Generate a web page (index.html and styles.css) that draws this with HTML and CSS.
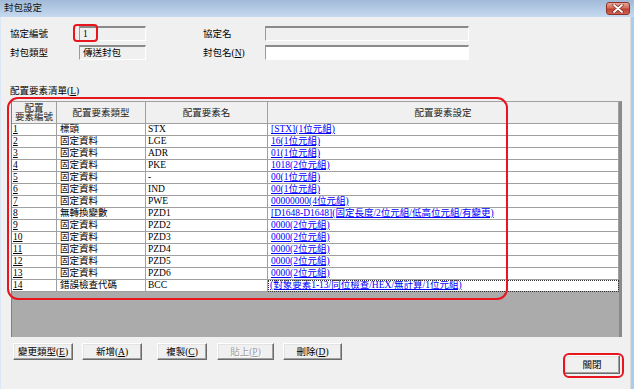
FILE: index.html
```html
<!DOCTYPE html>
<html lang="zh-Hant">
<head>
<meta charset="utf-8">
<title>封包設定</title>
<link rel="stylesheet" href="styles.css">
</head>
<body>
<div class="window">
  <div class="titlebar">
    <span class="title">封包設定</span>
    <button class="close" aria-label="close">
      <svg width="12" height="9" viewBox="0 0 12 9">
        <path d="M2 1 L10 8 M10 1 L2 8" stroke="#7a2a22" stroke-width="3.2" stroke-linecap="round"/>
        <path d="M2 1 L10 8 M10 1 L2 8" stroke="#ffffff" stroke-width="1.8" stroke-linecap="round"/>
      </svg>
    </button>
  </div>
  <div class="body">
    <div class="frow">
      <span class="lbl">協定編號</span><div class="tb tb-short ro">1</div>
      <span class="lbl2">協定名</span><div class="tb tb-wide ro"></div>
    </div>
    <div class="frow">
      <span class="lbl">封包類型</span><div class="tb tb-short ro">傳送封包</div>
      <span class="lbl2">封包名(<u>N</u>)</span><div class="tb tb-wide"></div>
    </div>
    <div class="listlabel">配置要素清單(<u>L</u>)</div>
    <div class="grid">
      <div class="ghead">
        <div class="hc hc-two">配置<br>要素編號</div>
        <div class="hc">配置要素類型</div>
        <div class="hc">配置要素名</div>
        <div class="hc">配置要素設定</div>
      </div>
      <div class="grow"><div class="c c1"><u>1</u></div><div class="c c2">標頭</div><div class="c c3">STX</div><div class="c c4"><a href="#">[STX](1位元組)</a></div></div>
      <div class="grow"><div class="c c1"><u>2</u></div><div class="c c2">固定資料</div><div class="c c3">LGE</div><div class="c c4"><a href="#">16(1位元組)</a></div></div>
      <div class="grow"><div class="c c1"><u>3</u></div><div class="c c2">固定資料</div><div class="c c3">ADR</div><div class="c c4"><a href="#">01(1位元組)</a></div></div>
      <div class="grow"><div class="c c1"><u>4</u></div><div class="c c2">固定資料</div><div class="c c3">PKE</div><div class="c c4"><a href="#">1018(2位元組)</a></div></div>
      <div class="grow"><div class="c c1"><u>5</u></div><div class="c c2">固定資料</div><div class="c c3">-</div><div class="c c4"><a href="#">00(1位元組)</a></div></div>
      <div class="grow"><div class="c c1"><u>6</u></div><div class="c c2">固定資料</div><div class="c c3">IND</div><div class="c c4"><a href="#">00(1位元組)</a></div></div>
      <div class="grow"><div class="c c1"><u>7</u></div><div class="c c2">固定資料</div><div class="c c3">PWE</div><div class="c c4"><a href="#">00000000(4位元組)</a></div></div>
      <div class="grow"><div class="c c1"><u>8</u></div><div class="c c2">無轉換變數</div><div class="c c3">PZD1</div><div class="c c4"><a href="#">[D1648-D1648](固定長度/2位元組/低高位元組/有變更)</a></div></div>
      <div class="grow"><div class="c c1"><u>9</u></div><div class="c c2">固定資料</div><div class="c c3">PZD2</div><div class="c c4"><a href="#">0000(2位元組)</a></div></div>
      <div class="grow"><div class="c c1"><u>10</u></div><div class="c c2">固定資料</div><div class="c c3">PZD3</div><div class="c c4"><a href="#">0000(2位元組)</a></div></div>
      <div class="grow"><div class="c c1"><u>11</u></div><div class="c c2">固定資料</div><div class="c c3">PZD4</div><div class="c c4"><a href="#">0000(2位元組)</a></div></div>
      <div class="grow"><div class="c c1"><u>12</u></div><div class="c c2">固定資料</div><div class="c c3">PZD5</div><div class="c c4"><a href="#">0000(2位元組)</a></div></div>
      <div class="grow"><div class="c c1"><u>13</u></div><div class="c c2">固定資料</div><div class="c c3">PZD6</div><div class="c c4"><a href="#">0000(2位元組)</a></div></div>
      <div class="grow"><div class="c c1"><u>14</u></div><div class="c c2">錯誤檢查代碼</div><div class="c c3">BCC</div><div class="c c4 focus"><a href="#">(對象要素1-13/同位檢查/HEX/無計算/1位元組)</a></div></div>
    </div>
    <div class="btns">
      <button class="btn b1">變更類型(<u>E</u>)</button>
      <button class="btn b2">新增(<u>A</u>)</button>
      <button class="btn b3">複製(<u>C</u>)</button>
      <button class="btn b4" disabled>貼上(<u>P</u>)</button>
      <button class="btn b5">刪除(<u>D</u>)</button>
      <button class="btn bclose">關閉</button>
    </div>
  </div>
  <div class="hl hl-num"></div>
  <div class="hl hl-table"></div>
  <div class="hl hl-close"></div>
</div>
</body>
</html>
```
FILE: styles.css
```css
* { box-sizing: border-box; margin: 0; padding: 0; }
html, body { width: 634px; height: 389px; overflow: hidden; }
body {
  font-family: "Liberation Serif", "Noto Sans CJK TC", serif;
  font-size: 9.5px;
  line-height: 12px;
  color: #000;
  background: #f0f0f0;
}
.window { position: relative; width: 634px; height: 389px; display: flex; flex-direction: column; }

.titlebar {
  height: 17px; flex: none;
  background: linear-gradient(#a1bad8, #c6daf0);
  display: flex; align-items: center; justify-content: space-between;
  padding: 0 4px 0 4px;
}
.title { color: #111; line-height: 17px; }
.close {
  width: 24px; height: 13px;
  border: 1px solid #8d3328; border-radius: 3px;
  background: linear-gradient(#e9a697, #d46a58 45%, #c1402f 55%, #cf6352);
  display: flex; align-items: center; justify-content: center;
  margin-top: 0;
}

.body {
  flex: 1;
  background: #f0f0f0;
  border-left: 1px solid #dbe7f4;
  border-right: 3px solid #a9cdf0;
  box-shadow: inset -1px 0 #dcdcdc;
  padding: 9px 11px 0 9px;
  display: flex; flex-direction: column;
}

.frow { display: flex; align-items: center; height: 15px; }
.frow + .frow { margin-top: 4px; }
.lbl { width: 69px; }
.lbl2 { width: 62px; margin-left: 57px; }
.tb {
  height: 15px;
  background: #fff;
  border-top: 2px solid #8a8a8a;
  border-left: 1px solid #9a9a9a;
  border-right: 1px solid #fff;
  border-bottom: 1px solid #fff;
  box-shadow: 0 0 0 0 transparent;
  padding-left: 3px;
  line-height: 12px;
  white-space: nowrap;
}
.tb.ro { background: #f0f0f0; }
.tb-short { width: 67px; }
.tb-wide { width: 204px; }

.listlabel { margin-top: 25px; height: 12px; }

.grid {
  margin-top: 4px;
  margin-left: 1px;
  width: 611px;
  height: 236px;
  flex: none;
  background: #ababab;
  border-top: 1px solid #a0a0a0;
  border-left: 1px solid #808080;
  border-right: 3px solid #8a8a8a;
}
.ghead, .grow {
  display: grid;
  grid-template-columns: 45px 89px 122px 351px;
}
.ghead { height: 22px; }
.hc {
  background: #f0f0f0;
  border-right: 1px solid #a0a0a0;
  border-bottom: 1px solid #a0a0a0;
  display: flex; align-items: center; justify-content: center;
  text-align: center;
  color: #222;
}
.hc-two { line-height: 9.5px; padding-top: 1px; }
.grow { height: 12px; }
.c {
  background: #fff;
  border-right: 1px solid #a0a0a0;
  border-bottom: 1px solid #a0a0a0;
  white-space: nowrap;
  overflow: hidden;
  line-height: 11px;
}
.c1 { padding-left: 1px; }
.c2 { padding-left: 3px; }
.c3 { padding-left: 2px; }
.c4 { padding-left: 3px; }
.c4 a { color: #0000ff; text-decoration: underline; }
.c4.focus { outline: 1px dotted #333; outline-offset: -1px; padding-left: 2px; }

.btns { display: flex; align-items: flex-start; margin-top: 6px; padding-left: 3px; }
.btn {
  height: 17px;
  font: inherit;
  line-height: 12px;
  color: #000;
  background: #f0f0f0;
  border: 1px solid;
  border-color: #fff #6a6a6a #6a6a6a #fff;
  box-shadow: inset -1px -1px #a0a0a0, inset 1px 1px #e3e3e3;
  white-space: nowrap;
}
.b1 { width: 60px; }
.b2 { width: 60px; margin-left: 9px; }
.b3 { width: 50px; margin-left: 15px; }
.b4 { width: 57px; margin-left: 10px; color: #a0a0a0; text-shadow: 1px 1px #fff; }
.b5 { width: 59px; margin-left: 9px; }
.bclose { width: 56px; height: 19px; margin-left: auto; margin-top: 12px; }

.hl {
  position: absolute;
  border: 2px solid #e8141e;
  pointer-events: none;
}
.hl-num { left: 73px; top: 24px; width: 25px; height: 18px; border-radius: 4px; }
.hl-table { left: 7px; top: 97px; width: 501px; height: 203px; border-radius: 11px; }
.hl-close { left: 563px; top: 353px; width: 61px; height: 25px; border-radius: 6px; }
```
